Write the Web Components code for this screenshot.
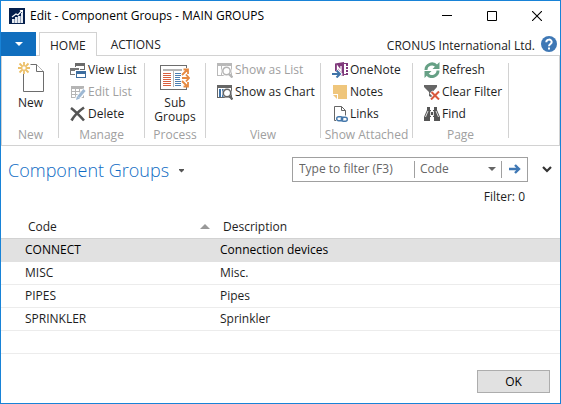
<!DOCTYPE html>
<html lang="en">
<head>
<meta charset="utf-8">
<title>Edit - Component Groups - MAIN GROUPS</title>
<style>
  html, body { margin: 0; height: 100%; }
  body { font: 12px/16px "Segoe UI", "Open Sans", "Noto Sans", sans-serif; color: #1e1e1e; background: #fff; }
</style>
</head>
<body>
<app-window>
  <title-bar slot="title">Edit - Component Groups - MAIN GROUPS</title-bar>
  <tab-strip slot="tabs" company="CRONUS International Ltd."></tab-strip>
  <ribbon-bar slot="ribbon">
    <ribbon-group label="New" size="s"><ribbon-command big icon="new">New</ribbon-command></ribbon-group>
    <ribbon-group label="Manage" size="m">
      <ribbon-command icon="viewlist">View List</ribbon-command>
      <ribbon-command icon="editlist" disabled>Edit List</ribbon-command>
      <ribbon-command icon="delete">Delete</ribbon-command>
    </ribbon-group>
    <ribbon-group label="Process" size="p"><ribbon-command big icon="sub">Sub<br>Groups</ribbon-command></ribbon-group>
    <ribbon-group label="View" size="xl">
      <ribbon-command icon="aslist" disabled>Show as List</ribbon-command>
      <ribbon-command icon="aschart">Show as Chart</ribbon-command>
    </ribbon-group>
    <ribbon-group label="Show Attached" size="l">
      <ribbon-command icon="onenote">OneNote</ribbon-command>
      <ribbon-command icon="notes">Notes</ribbon-command>
      <ribbon-command icon="links">Links</ribbon-command>
    </ribbon-group>
    <ribbon-group label="Page" size="last">
      <ribbon-command icon="refresh">Refresh</ribbon-command>
      <ribbon-command icon="clear">Clear Filter</ribbon-command>
      <ribbon-command icon="find">Find</ribbon-command>
    </ribbon-group>
  </ribbon-bar>
  <page-header slot="header">Component Groups</page-header>
  <group-list></group-list>
  <dialog-footer slot="footer">OK</dialog-footer>
</app-window>

<script>
const ICONS = {
  logo: [16, `<path fill="#06204d" d="M0 0h16v16H0z"/><g shape-rendering="crispEdges"><path fill="#e8ecf2" d="M3 11h2v4H3zM6 9h2v6H6zM9 8h2v7H9zM12 5h2v10h-2z"/><path fill="#8f9db5" d="M5 11h1v4H5zM8 9h1v6H8zM11 8h1v7h-1z"/></g><path fill="none" stroke="#fff" stroke-width="1.2" d="M3 9l4-3 2 1 4-4.500"/><path fill="#fff" d="M10.500 2H14v3.500z"/>`],
  new: [26, `<path fill="#fff" stroke="#6d6d6d" d="M5.500 12v17.500h20V9.500l-7-7h-6"/><path fill="#fff" stroke="#6d6d6d" d="M18.500 2.500v7h7"/><path fill="#fff" d="M0 0h12v12H0z"/><g stroke="#ecc069" stroke-width="1.800" fill="none"><path d="M6 0v12M0 6h12M1.500 1.500l9 9M10.500 1.500l-9 9"/></g><circle cx="6" cy="6" r="2.200" fill="#fff"/><circle cx="6" cy="6" r="2.200" fill="none" stroke="#ecc069"/>`, 30],
  viewlist: [16, `<g shape-rendering="crispEdges"><path fill="#6b6b6b" d="M5 1h10v7H5z"/><path fill="#fff" d="M6 4h8v3H6z"/><path fill="#fff" d="M0 5h10v8H0z"/><path fill="#777" d="M0 6h9v7H0z"/><path fill="#fff" d="M1 9h7v3H1z"/><path fill="#fff" d="M5 8h11v8H5z"/><path fill="#3d6d9f" d="M6 9h10v7H6z"/><path fill="#fff" d="M7 12h8v3H7z"/></g>`],
  editlist: [16, `<path shape-rendering="crispEdges" fill="#b5b5b5" d="M1 2h13v12H1z"/><path shape-rendering="crispEdges" fill="#fff" d="M2 5h3v2H2zM6 5h3v2H6zM10 5h3v2h-3zM2 8h3v2H2zM6 8h3v2H6zM10 8h3v2h-3zM2 11h3v2H2zM6 11h3v2H6zM10 11h3v2h-3z"/><path stroke="#fff" stroke-width="5" d="M7 15l8-9"/><path stroke="#9db8d3" stroke-width="3" d="M8.500 13l6-7"/><path fill="#9db8d3" d="M6 16l1-4 3 2.500z"/>`],
  delete: [16, `<path fill="none" stroke="#555" stroke-width="2.600" d="M1 2c4 3 9 8 13 12.500M14 1.500C9 5 4 10 1.500 14.500"/>`],
  sub: [30, `<g shape-rendering="crispEdges"><path fill="none" stroke="#6d6d6d" d="M.5 3.500h26v24H.5z"/><path fill="#b5b5b5" d="M3 7h21v2H3zM13 9h1v16h-1z"/><path stroke="#d9603f" d="M3 11.500h8M3 13.500h8M3 15.500h8M3 17.500h8M3 19.500h8M3 21.500h8M3 23.500h8"/></g><path fill="#fff" d="M22 6h8v19h-8z"/><path shape-rendering="crispEdges" stroke="#4d80b3" d="M15 11.500h6M15 13.500h6M15 15.500h5M15 17.500h5M15 19.500h6M15 21.500h6M15 23.500h6"/><g fill="none" stroke="#e68a42" stroke-width="1.800"><path d="M22 13l5-5M22 16h7M22 19l5 5M23.500 7.500H28V12M26 12.500l3 3.500-3 3.500M23.500 24.500H28V20"/></g>`, 30],
  aslist: [16, `<path shape-rendering="crispEdges" fill="#b9b9b9" d="M0 1h15v13H0z"/><path shape-rendering="crispEdges" fill="#fff" d="M1 4h3v9H1zM5 4h4v9H5zM10 4h4v9h-4z"/><circle cx="9.500" cy="9" r="5.200" fill="#fff"/><circle cx="9.500" cy="9" r="3.700" fill="#fff" stroke="#b5b5b5" stroke-width="1.500"/><path stroke="#b5b5b5" stroke-width="2.400" d="M12 12l3.500 3.500"/>`],
  aschart: [16, `<path shape-rendering="crispEdges" fill="#666" d="M0 1h15v13H0z"/><path shape-rendering="crispEdges" fill="#fff" d="M1 4h13v9H1z"/><path shape-rendering="crispEdges" fill="#3f73a8" d="M2 5h2v8H2zM5 5h2v8H5z"/><circle cx="10" cy="9" r="4.800" fill="#fff"/><circle cx="10" cy="9" r="3.700" fill="#fff" stroke="#666" stroke-width="1.500"/><path stroke="#666" stroke-width="2.400" d="M12.500 12l3 3.500"/>`],
  onenote: [16, `<path shape-rendering="crispEdges" fill="#80397b" d="M11 1h5v12h-5z"/><path shape-rendering="crispEdges" fill="#fff" d="M12 2h2v10h-2zM14 4h2v1h-2zM14 7h2v1h-2zM14 10h2v1h-2z"/><path fill="#80397b" d="M3 1.500L12 0v14l-4-1-5-4z"/><path fill="none" stroke="#fff" stroke-width="1.300" d="M5.500 9V4.500L9 9V4"/><path fill="none" stroke="#fff" stroke-width="4" d="M0 12h6M4.500 8.500L8 12l-3.500 3.500"/><path fill="none" stroke="#3f73a8" stroke-width="2" d="M0 12h7M4.500 8.500L8 12l-3.500 3.500"/>`],
  notes: [16, `<path fill="#efc67c" d="M1 1h14v14H6v-5H1z"/><path fill="#efc67c" d="M1 11h4v4z"/>`],
  links: [16, `<path fill="#fff" stroke="#666" d="M8 14.500H2.500V.500h7l4 4V11"/><path fill="none" stroke="#666" d="M9.500.500v4h4"/><path fill="#fff" d="M4 9.500h12V16H4z"/><g fill="none" stroke="#4578ab" stroke-width="1.400"><rect x="4.700" y="10.700" width="6" height="4" rx="2"/><rect x="9.300" y="11.300" width="6" height="4" rx="2"/></g>`],
  refresh: [16, `<g fill="none" stroke="#66a085" stroke-width="3"><path d="M2 8a6 6 0 0 1 10.500-4M14 8.500A6 6 0 0 1 3.500 12.500"/></g><path fill="#66a085" d="M15.500 0v7h-7zM.5 16V9h7z"/>`],
  clear: [16, `<path fill="#666" d="M0 1h13v2L8.500 8v6L5 12V8L0 3z"/><path stroke="#fff" stroke-width="4" d="M7 8l8 8M15 8l-8 8"/><path stroke="#d9593c" stroke-width="2" d="M7.500 8l7.500 7.500M15 7.500L7 15.500"/>`],
  find: [16, `<path fill="#555" d="M3 1h3v3h1v2h2V4h1V1h3v3l3 7v4h-6v-4H9V9H7v2H6v4H0v-4l3-7z"/><path stroke="#fff" stroke-width=".8" d="M4 5l-2.500 6M12 5l2.500 6M6.500 5v5M9.500 5v5"/>`],
  help: [16, `<circle cx="8" cy="8" r="8" fill="#3f78b5"/><path fill="none" stroke="#fff" stroke-width="2" d="M5.300 6.200C5.300 2.800 10.700 2.800 10.700 6c0 2-2.700 2-2.700 4.300"/><path fill="#fff" d="M7 11.500h2v2H7z"/>`],
  min: [10, `<path stroke="#000" d="M0 4.500h10"/>`],
  max: [10, `<path fill="none" stroke="#000" d="M.5.500h9v9h-9z"/>`],
  close: [10, `<path stroke="#000" stroke-width="1.100" d="M0 0l10 10M10 0L0 10"/>`],
  down: [8, `<path fill="currentColor" d="M0 0h8L4 4z"/>`, 4],
  up: [10, `<path fill="#999" d="M5 0l5 5H0z"/>`, 5],
  caret: [5, `<path fill="currentColor" d="M0 0h5v1L2.500 3.500 0 1z"/>`, 4],
  arrow: [12, `<path fill="none" stroke="#3f78b5" stroke-width="2.400" d="M0 5h10M6 1l4 4-4 4"/>`, 10],
  chevron: [10, `<path fill="none" stroke="#333" stroke-width="2.200" d="M1 1l4 4 4-4"/>`, 7]
};
const svg = name => {
  const [w, body, h = w] = ICONS[name];
  return `<svg width="${w}" height="${h}" viewBox="0 0 ${w} ${h}" aria-hidden="true">${body}</svg>`;
};
const BASE = `<style>
  * { box-sizing: border-box; }
  svg { display: block; flex: none; }
  button, input, select { font: inherit; color: inherit; background: none; border: 0; border-radius: 0; margin: 0; padding: 0; outline: 0; }
</style>`;
const define = (name, render) => customElements.define(name, class extends HTMLElement {
  constructor() { super(); this.attachShadow({ mode: "open" }); }
  connectedCallback() { this.shadowRoot.innerHTML = BASE + render(this); }
});

define("app-window", () => `<style>
  :host { display: flex; flex-direction: column; min-height: 100vh; box-sizing: border-box; border: 1px solid #1883d7; background: #fff; }
  main { flex: 1; }
</style>
<slot name="title"></slot><slot name="tabs"></slot><slot name="ribbon"></slot><slot name="header"></slot><main><slot></slot></main><slot name="footer"></slot>`);

define("title-bar", () => `<style>
  :host { display: flex; align-items: center; height: 31px; box-sizing: border-box; padding: 0 18px 2px 8px; color: #000; }
  span { flex: 1; padding-left: 5px; white-space: nowrap; }
  .controls { display: flex; gap: 35px; }
</style>
${svg("logo")}<span><slot></slot></span>
<div class="controls"><button aria-label="Minimize">${svg("min")}</button><button aria-label="Maximize">${svg("max")}</button><button aria-label="Close">${svg("close")}</button></div>`);

define("tab-strip", el => `<style>
  :host { display: flex; height: 24px; padding-right: 3px; box-shadow: inset 0 -1px #d2d2d2; color: #222; }
  .app { width: 35px; background: #106ebe; color: #fff; display: grid; place-items: center; margin-right: 3px; }
  .tab { padding: 2px 10px 0; }
  .on { border: 1px solid #d2d2d2; border-bottom: 0; background: #fff; }
  .other { margin-left: 4px; }
  .company { margin-left: auto; padding-right: 6px; line-height: 27px; }
  .help { align-self: center; }
</style>
<button class="app" aria-label="Application menu">${svg("down")}</button>
<button class="tab on">HOME</button><button class="tab other">ACTIONS</button>
<span class="company">${el.getAttribute("company")}</span><button class="help" aria-label="Help">${svg("help")}</button>`);

define("ribbon-bar", () => `<style>
  :host { display: flex; height: 90px; padding: 3px 0 2px 1px; box-sizing: border-box; border: solid #d2d2d2; border-width: 0 1px 1px; }
</style><slot></slot>`);

define("ribbon-group", el => `<style>
  :host { display: flex; flex-direction: column; box-sizing: border-box; background: linear-gradient(#d2d2d2, #d2d2d2) right 4px / 1px 75px no-repeat; background-position: right 0 top 4px; padding-right: 1px; }
  :host([size="s"]) { width: 56px; }
  :host([size="m"]) { width: 86px; }
  :host([size="p"]) { width: 61px; }
  :host([size="xl"]) { width: 115px; }
  :host([size="l"]) { width: 92px; }
  :host([size="last"]) { width: 96px; }
  .items { height: 68px; padding-left: 11px; }
  :host([size="s"]) .items, :host([size="p"]) .items { padding: 0; }
  .label { text-align: center; color: #a0a0a0; white-space: nowrap; }
</style>
<div class="items"><slot></slot></div><div class="label">${el.getAttribute("label")}</div>`);

define("ribbon-command", el => `<style>
  :host { display: block; }
  button { display: flex; align-items: center; gap: 2px; height: 22px; white-space: nowrap; color: #1e1e1e; }
  button:disabled { color: #a0a0a0; }
  :host([big]) button { width: 100%; height: auto; flex-direction: column; gap: 4px; line-height: 14px; padding-top: 3px; }
</style>
<button ${el.hasAttribute("disabled") ? "disabled" : ""}>${svg(el.getAttribute("icon"))}<span><slot></slot></span></button>`);

define("page-header", () => `<style>
  :host { display: grid; grid-template-columns: 1fr auto; padding: 8px 8px 0 7px; }
  h1 { margin: 0; padding-top: 3px; display: flex; align-items: center; gap: 10px; font-weight: 300; font-size: 18px; line-height: 27px; color: #0f6cc4; }
  h1 button { color: #555; }
  .tools { display: flex; align-items: center; gap: 14px; }
  form { display: flex; align-items: center; width: 236px; height: 25px; border: 1px solid #a0a0a0; color: #666; }
  input { flex: 1; min-width: 0; padding-left: 6px; }
  input::placeholder { color: #666; opacity: 1; }
  .pick { display: grid; align-items: center; width: 88px; height: 17px; border: solid #a0a0a0; border-width: 0 1px; padding: 0 5px; }
  .pick > * { grid-area: 1 / 1; }
  select { appearance: none; width: 100%; }
  .pick svg { justify-self: end; pointer-events: none; }
  .go { width: 25px; display: grid; place-items: center; }
  .count { grid-column: 2; padding: 4px 27px 0 0; text-align: right; line-height: 18px; }
</style>
<h1><slot></slot><button aria-label="Page menu">${svg("caret")}</button></h1>
<div class="tools">
  <form><input type="text" aria-label="Filter" placeholder="Type to filter (F3)">
  <label class="pick"><select aria-label="Filter field"><option>Code</option><option>Description</option></select>${svg("down")}</label>
  <button type="button" class="go" aria-label="Apply filter">${svg("arrow")}</button></form>
  <button aria-label="Expand filter">${svg("chevron")}</button>
</div>
<div class="count">Filter: 0</div>`);

define("group-list", () => {
  const rows = [["CONNECT", "Connection devices"], ["MISC", "Misc."], ["PIPES", "Pipes"], ["SPRINKLER", "Sprinkler"], ["", ""]];
  return `<style>
  :host { display: block; padding-top: 9px; }
  table { width: 100%; border-collapse: separate; border-spacing: 0; table-layout: fixed; }
  col.code { width: 213px; }
  th, td { text-align: left; font-weight: 400; height: 23px; padding: 0 6px; border-bottom: 1px solid #ececec; white-space: nowrap; }
  th { height: 24px; padding: 0 9px; border-color: #d2d2d2; }
  th:first-child { padding: 0 4px 0 27px; }
  td:first-child { padding-left: 24px; }
  .sort { display: flex; justify-content: space-between; align-items: center; }
  .on td { background: #e1e1e1; border-color: #e1e1e1; color: #000; }
</style>
<table><colgroup><col class="code"><col></colgroup>
<thead><tr><th aria-sort="ascending"><div class="sort">Code${svg("up")}</div></th><th>Description</th></tr></thead>
<tbody>${rows.map((r, i) => `<tr${i ? "" : ' class="on"'}><td>${r[0]}</td><td>${r[1]}</td></tr>`).join("")}</tbody></table>`;
});

define("dialog-footer", () => `<style>
  :host { display: flex; justify-content: flex-end; padding: 10px; }
  button { width: 73px; height: 23px; background: #e1e1e1; border: 1px solid #adadad; color: #000; }
</style><button><slot></slot></button>`);
</script>
</body>
</html>
